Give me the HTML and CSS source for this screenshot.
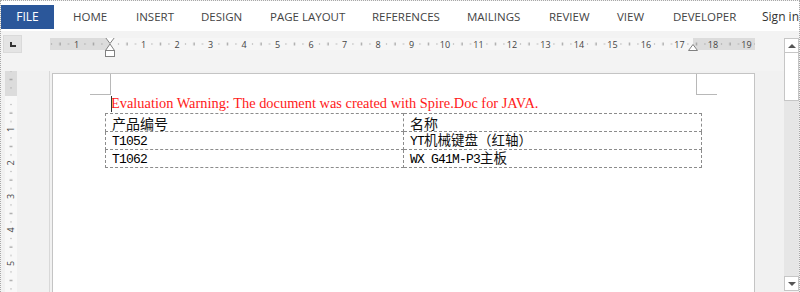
FILE: index.html
```html
<!DOCTYPE html>
<html lang="zh">
<head>
<meta charset="utf-8">
<title>Word</title>
<link rel="stylesheet" href="styles.css">
</head>
<body>
<div class="frame">
  <nav class="tabs">
    <div class="file">FILE</div>
    <div class="tab w63">HOME</div>
    <div class="tab w65">INSERT</div>
    <div class="tab w69">DESIGN</div>
    <div class="tab w102">PAGE LAYOUT</div>
    <div class="tab w95">REFERENCES</div>
    <div class="tab w82">MAILINGS</div>
    <div class="tab w68">REVIEW</div>
    <div class="tab w56">VIEW</div>
    <div class="tab w89">DEVELOPER</div>
    <div class="tab signin">Sign in</div>
  </nav>
  <div class="workspace">
    <div class="tabsel"><span class="tabsel-l"></span></div>
    <div class="hruler-cell">
      <svg class="hruler" width="710" height="22" viewBox="0 0 710 22">
        <defs>
          <pattern id="ht" patternUnits="userSpaceOnUse" x="60" y="0" width="33.5" height="12">
            <rect x="8" y="5.5" width="1" height="1" fill="#8a8a8a"/>
            <rect x="16.5" y="4.5" width="1" height="3" fill="#8a8a8a"/>
            <rect x="25" y="5.5" width="1" height="1" fill="#8a8a8a"/>
          </pattern>
        </defs>
        <rect x="0" y="0" width="705" height="12" fill="#dcdcdc"/>
        <rect x="60" y="0" width="583" height="12" fill="#f6f6f6"/>
        <rect x="0" y="0" width="705" height="12" fill="url(#ht)"/>
        <g class="rn" fill="#444" font-size="9" text-anchor="middle">
          <text x="26.5" y="9.5">1</text>
          <text x="93.5" y="9.5">1</text>
          <text x="127" y="9.5">2</text>
          <text x="160.5" y="9.5">3</text>
          <text x="194" y="9.5">4</text>
          <text x="227.5" y="9.5">5</text>
          <text x="261" y="9.5">6</text>
          <text x="294.5" y="9.5">7</text>
          <text x="328" y="9.5">8</text>
          <text x="361.5" y="9.5">9</text>
          <text x="395" y="9.5">10</text>
          <text x="428.5" y="9.5">11</text>
          <text x="462" y="9.5">12</text>
          <text x="495.5" y="9.5">13</text>
          <text x="529" y="9.5">14</text>
          <text x="562.5" y="9.5">15</text>
          <text x="596" y="9.5">16</text>
          <text x="629.5" y="9.5">17</text>
          <text x="663" y="9.5">18</text>
          <text x="696.5" y="9.5">19</text>
        </g>
        <g fill="#fff" stroke="#808080" stroke-width="1">
          <path d="M55.5 -0.5 H64.5 L60 5.5 Z"/>
          <path d="M60 6 L55.5 12.5 H64.5 Z"/>
          <rect x="55.5" y="12.5" width="9" height="6"/>
          <path d="M643 6.5 L638.5 12.5 H647.5 Z"/>
        </g>
      </svg>
    </div>
    <div class="scrollbar">
      <div class="sb-btn"><span class="arrow-up"></span></div>
      <div class="sb-thumb"></div>
      <div class="sb-track"></div>
      <div class="sb-btn"><span class="arrow-down"></span></div>
    </div>
    <div class="vruler-cell">
      <svg class="vruler" width="12" height="221" viewBox="0 0 12 221">
        <defs>
          <pattern id="vt" patternUnits="userSpaceOnUse" x="0" y="25" width="12" height="33.5">
            <rect x="5.5" y="8" width="1" height="1" fill="#8a8a8a"/>
            <rect x="4.5" y="16.5" width="3" height="1" fill="#8a8a8a"/>
            <rect x="5.5" y="25" width="1" height="1" fill="#8a8a8a"/>
          </pattern>
        </defs>
        <rect x="0" y="0" width="12" height="221" fill="#f8f8f8"/>
        <rect x="0" y="0" width="12" height="25" fill="#dcdcdc"/>
        <rect x="0" y="0" width="12" height="221" fill="url(#vt)"/>
        <g fill="#444" font-size="9" text-anchor="middle">
          <text transform="translate(9.3 58.5) rotate(-90)">1</text>
          <text transform="translate(9.3 92) rotate(-90)">2</text>
          <text transform="translate(9.3 125.5) rotate(-90)">3</text>
          <text transform="translate(9.3 159) rotate(-90)">4</text>
          <text transform="translate(9.3 192.5) rotate(-90)">5</text>
        </g>
      </svg>
    </div>
    <div class="canvas">
      <div class="page">
        <span class="crop crop-tl"></span>
        <span class="crop crop-tr"></span>
        <span class="caret"></span>
        <p class="warning">Evaluation Warning: The document was created with Spire.Doc for JAVA.</p>
        <table class="doc-table">
          <tr><td class="c1 head">产品编号</td><td class="head">名称</td></tr>
          <tr><td class="c1"><span class="lat">T1052</span></td><td><span class="lat">YT</span>机械键盘（红轴）</td></tr>
          <tr><td class="c1"><span class="lat">T1062</span></td><td><span class="lat">WX G41M-P3</span>主板</td></tr>
        </table>
      </div>
    </div>
  </div>
</div>
</body>
</html>
```
FILE: styles.css
```css
* { box-sizing: border-box; }
html, body { margin: 0; padding: 0; }
body {
  width: 800px;
  height: 292px;
  overflow: hidden;
  background: #fff;
  font-family: "Open Sans", "Noto Sans", sans-serif;
}
.frame {
  width: 800px;
  height: 292px;
  border: 1px dotted #a8a8a8;
  border-bottom-width: 0;
  overflow: hidden;
  position: relative;
  background: #f3f3f3;
}
.tabs {
  display: flex;
  align-items: center;
  height: 30px;
  padding-top: 2px;
  background: #fff;
  white-space: nowrap;
}
.file {
  width: 57px;
  height: 24px;
  background: #2b579a;
  color: #fff;
  font-size: 12px;
  line-height: 24px;
  text-align: center;
  margin-right: 19px;
}
.tab {
  font-size: 11.5px;
  color: #444;
  line-height: 24px;
  flex: none;
}
.w56 { width: 56px; }
.w63 { width: 63px; }
.w65 { width: 65px; }
.w68 { width: 68px; }
.w69 { width: 69px; }
.w82 { width: 82px; }
.w89 { width: 89px; }
.w95 { width: 95px; }
.w102 { width: 102px; }
.signin { font-size: 12px; color: #333; }

.workspace {
  display: grid;
  grid-template-columns: 49px 734px 15px;
  grid-template-rows: 40px 221px;
  background: #f3f3f3;
}
.tabsel {
  margin: 4px 0 0 2px;
  width: 19px;
  height: 18px;
  background: #e4e4e4;
  border: 1px solid #dadada;
  position: relative;
}
.tabsel-l {
  position: absolute;
  left: 6px;
  top: 6px;
  width: 6px;
  height: 5px;
  border-left: 2px solid #333;
  border-bottom: 2px solid #333;
}
.hruler-cell { padding-top: 7px; }
.hruler { display: block; font-family: "Open Sans", "Noto Sans", sans-serif; }
.vruler-cell {
  padding-left: 4px;
  border-right: 1px solid #d8d8d8;
  background: #f1f1f1;
}
.vruler { display: block; font-family: "Open Sans", "Noto Sans", sans-serif; }

.scrollbar {
  grid-column: 3;
  grid-row: 1 / 3;
  margin-top: 7px;
  display: flex;
  flex-direction: column;
  background: #e8e8e8;
  height: 253px;
}
.sb-btn {
  height: 15px;
  background: #fff;
  border: 1px solid #c6c6c6;
  display: flex;
  align-items: center;
  justify-content: center;
}
.arrow-up {
  width: 0; height: 0;
  border-left: 4px solid transparent;
  border-right: 4px solid transparent;
  border-bottom: 4px solid #555;
}
.arrow-down {
  width: 0; height: 0;
  border-left: 4px solid transparent;
  border-right: 4px solid transparent;
  border-top: 4px solid #555;
}
.sb-thumb {
  height: 48px;
  background: #fff;
  border: 1px solid #c6c6c6;
  border-top: 0;
}
.sb-track { flex: 1; background: #e6e6e6; }

.canvas {
  padding: 2px 0 0 2px;
  background: #f1f1f1;
  overflow: hidden;
}
.page {
  position: relative;
  width: 703px;
  height: 230px;
  background: #fff;
  border: 1px solid #c4c4c4;
  padding: 22px 0 0 58px;
}
.crop { position: absolute; width: 21px; height: 21px; }
.crop-tl {
  left: 37px; top: 0;
  border-right: 1px solid #b8b8b8;
  border-bottom: 1px solid #b8b8b8;
}
.crop-tr {
  left: 643px; top: 0;
  border-left: 1px solid #b8b8b8;
  border-bottom: 1px solid #b8b8b8;
}
.caret {
  position: absolute;
  left: 58px; top: 22px;
  width: 1px; height: 16px;
  background: #333;
}
.warning {
  margin: 0 0 2px;
  font-family: "Liberation Serif", "Times New Roman", serif;
  font-size: 14.4px;
  line-height: 15px;
  color: #ff1a1a;
  white-space: nowrap;
}
.doc-table {
  margin-left: -6px;
  border-collapse: collapse;
  width: 597px;
  font-family: "Noto Sans CJK SC", sans-serif;
  font-size: 13.5px;
  line-height: 14px;
  color: #111;
}
.doc-table tr { height: 18px; }
.doc-table td {
  border: 1px dashed #8c8c8c;
  padding: 0 0 0 6px;
  vertical-align: middle;
  white-space: nowrap;
}
.doc-table td.c1 { width: 298px; }
.doc-table td.head { font-size: 14px; }
.lat {
  font-family: "Liberation Mono", monospace;
  font-size: 13px;
  letter-spacing: -0.8px;
  color: #000;
}
```
